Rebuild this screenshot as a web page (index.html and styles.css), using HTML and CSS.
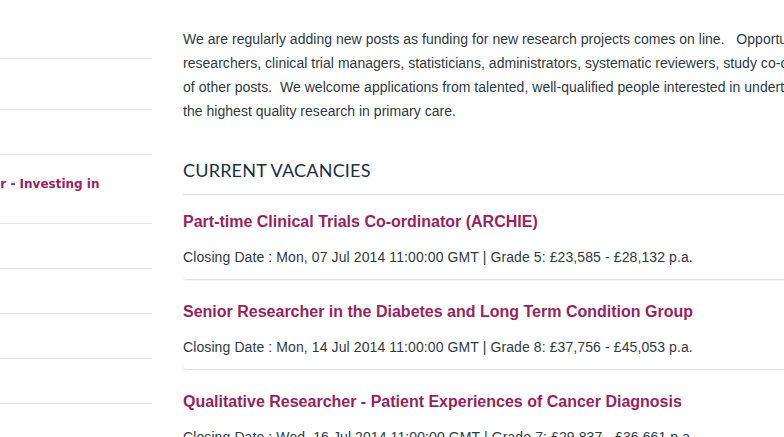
FILE: index.html
```html
<!DOCTYPE html>
<html lang="en">
<head>
<meta charset="utf-8">
<title>Current Vacancies</title>
<link rel="stylesheet" href="styles.css">
</head>
<body>
<div class="page">
  <aside class="sidebar">
    <ul class="side-list">
      <li class="side-item side-item--top"><a href="#">Work</a></li>
      <li class="side-item side-item--tall"><a href="#">Jobs</a></li>
      <li class="side-item"><a href="#">Training</a></li>
      <li class="side-item side-item--two"><a href="#">Research Officer - Investing in<br>Research</a></li>
      <li class="side-item"><a href="#">Students</a></li>
      <li class="side-item"><a href="#">Fellows</a></li>
      <li class="side-item"><a href="#">Visiting</a></li>
      <li class="side-item"><a href="#">Contact</a></li>
      <li class="side-item"><a href="#">Links</a></li>
    </ul>
  </aside>
  <main class="content">
    <p class="intro">We are regularly adding new posts as funding for new research projects comes on line. &nbsp; Opportunities exist for<br>researchers, clinical trial managers, statisticians, administrators, systematic reviewers, study co-ordinators and a range<br>of other posts. &nbsp;We welcome applications from talented, well-qualified people interested in undertaking and supporting<br>the highest quality research in primary care.</p>
    <h2 class="section-title">Current Vacancies</h2>
    <ul class="jobs">
      <li class="job">
        <a class="job-title" href="#">Part-time Clinical Trials Co-ordinator (ARCHIE)</a>
        <p class="job-meta">Closing Date : Mon, 07 Jul 2014 11:00:00 GMT | Grade 5: £23,585 - £28,132 p.a.</p>
      </li>
      <li class="job">
        <a class="job-title" href="#">Senior Researcher in the Diabetes and Long Term Condition Group</a>
        <p class="job-meta">Closing Date : Mon, 14 Jul 2014 11:00:00 GMT | Grade 8: £37,756 - £45,053 p.a.</p>
      </li>
      <li class="job">
        <a class="job-title" href="#">Qualitative Researcher - Patient Experiences of Cancer Diagnosis</a>
        <p class="job-meta">Closing Date : Wed, 16 Jul 2014 11:00:00 GMT | Grade 7: £29,837 - £36,661 p.a.</p>
      </li>
    </ul>
  </main>
</div>
</body>
</html>
```
FILE: styles.css
```css
html, body {
  margin: 0;
  padding: 0;
  overflow: hidden;
  background: #fff;
}
body {
  width: 784px;
  height: 437px;
  font-family: "Liberation Sans", Arial, sans-serif;
  color: #2f3a45;
}
.page {
  display: flex;
  align-items: flex-start;
}
.sidebar {
  width: 152px;
  flex-shrink: 0;
  overflow: hidden;
}
.side-list {
  list-style: none;
  margin: 0 0 0 -105px;
  padding: 0;
  width: 257px;
}
.side-item {
  border-bottom: 1px solid #e3e3e3;
  padding: 10px 0;
  font-family: "DejaVu Sans", Verdana, sans-serif;
  font-weight: bold;
  font-size: 12px;
  line-height: 24px;
  white-space: nowrap;
  color: transparent;
}
.side-item--top { padding-top: 24px; }
.side-item--tall { padding: 13px 0; }
.side-item--two { padding: 17px 0 3px; }
.side-item a {
  color: #9b1f5e;
  text-decoration: none;
}
.content {
  flex: 0 0 auto;
  width: 900px;
  margin-left: 31px;
  padding-top: 27px;
}
.intro {
  margin: 0;
  font-size: 14px;
  line-height: 24px;
  letter-spacing: 0.03px;
  white-space: nowrap;
}
.section-title {
  margin: 35px 0 0;
  padding-bottom: 12px;
  border-bottom: 1px solid #dedede;
  font-family: Lato, "Open Sans", sans-serif;
  font-weight: normal;
  font-size: 18px;
  line-height: 24px;
  letter-spacing: 0.2px;
  text-transform: uppercase;
  color: #1a3045;
}
.jobs {
  list-style: none;
  margin: 0;
  padding: 0;
}
.job {
  padding: 22px 0 12px;
  border-bottom: 1px solid #e2e2e2;
  border-radius: 0 0 0 4px;
  box-shadow: 0 1px 1px rgba(0, 0, 0, 0.03);
}
.job:first-child { padding-top: 17px; }
.job-title {
  display: block;
  font-weight: bold;
  font-size: 16px;
  line-height: 20px;
  color: #9b1f5e;
  text-decoration: none;
}
.job-meta {
  margin: 15px 0 0;
  font-size: 14px;
  line-height: 20px;
  letter-spacing: 0.1px;
  color: #2f3a45;
}
```
